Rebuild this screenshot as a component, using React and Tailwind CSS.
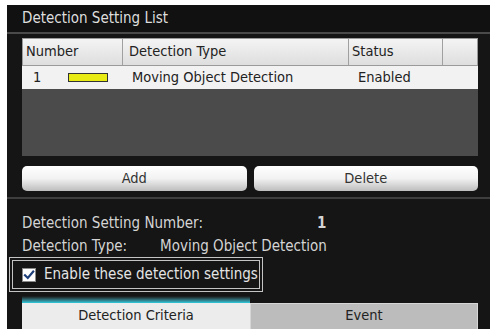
import React from 'react';

const font = { fontFamily: '"DejaVu Sans Condensed", "Liberation Sans", Arial, sans-serif' };

function CheckMark() {
  return (
    <span className="flex h-[14px] w-[14px] shrink-0 items-center justify-center border border-[#8a8a8a] bg-white">
      <svg viewBox="0 0 12 12" className="h-[12px] w-[12px]">
        <path d="M2 6.2 L4.8 9 L10.2 2.6" fill="none" stroke="#1d3f7a" strokeWidth="2.2" strokeLinecap="square" />
      </svg>
    </span>
  );
}

export default function App() {
  return (
    <div className="h-[329px] w-[495px] overflow-hidden bg-white pl-[7px] pr-[5px] pt-[5px]" style={font}>
      <div className="flex h-full flex-col overflow-hidden bg-[#151515] text-[#d8d8d8] [&>*]:shrink-0">
        {/* title */}
        <div className="flex h-[29px] items-center border-b-2 border-[#4a4a4a] bg-[#111111] pl-[15px] text-[15px] text-[#dedede]">
          Detection Setting List
        </div>

        {/* list table */}
        <div className="ml-[15px] mr-[12px] mt-[4px] flex h-[118px] flex-col bg-[#4b4b4b] text-[14.5px] text-[#222]">
          <div className="flex h-[28px] shrink-0 border border-[#9a9a9a] bg-gradient-to-b from-[#f4f4f4] to-[#dedede]">
            <div className="flex w-[100px] items-center border-r border-[#a0a0a0] pl-[3px]">Number</div>
            <div className="flex w-[226px] items-center border-r border-[#a0a0a0] pl-[6px]">Detection Type</div>
            <div className="flex w-[94px] items-center border-r border-[#a0a0a0] pl-[3px]">Status</div>
            <div className="flex-1" />
          </div>
          <div className="flex h-[23px] shrink-0 items-center bg-[#f2f2f2]">
            <div className="flex w-[100px] items-center">
              <span className="ml-[11px] w-[35px]">1</span>
              <span className="h-[9px] w-[40px] border border-[#333] bg-[#e8ec14]" />
            </div>
            <div className="w-[226px] pl-[10px]">Moving Object Detection</div>
            <div className="pl-[10px]">Enabled</div>
          </div>
        </div>

        {/* buttons */}
        <div className="ml-[15px] mr-[12px] mt-[10px] grid grid-cols-2 gap-[7px] text-[14.5px] text-[#333]">
          <button className="flex h-[25px] items-center justify-center rounded-[5px] bg-gradient-to-b from-[#ffffff] via-[#f2f2f2] to-[#bdbdbd]">
            Add
          </button>
          <button className="flex h-[25px] items-center justify-center rounded-[5px] bg-gradient-to-b from-[#ffffff] via-[#f2f2f2] to-[#bdbdbd]">
            Delete
          </button>
        </div>

        <div className="mt-[6px] border-b-2 border-[#3e3e3e]" />

        {/* details */}
        <div className="mt-[15px] flex h-[18px] items-center pl-[15px] text-[15px] text-[#d4d4d4]">
          <span className="w-[295px]">Detection Setting Number:</span>
          <span className="font-bold">1</span>
        </div>
        <div className="mt-[5px] flex h-[18px] items-center pl-[15px] text-[15px] text-[#d4d4d4]">
          <span className="w-[138px]">Detection Type:</span>
          <span>Moving Object Detection</span>
        </div>

        <div className="ml-[2px] mt-[2px] flex h-[35px] w-[254px] items-center gap-[8px] border-[4px] border-double border-[#c4c4c4] pl-[9px] text-[15px] text-[#e4e4e4]">
          <CheckMark />
          <span>Enable these detection settings</span>
        </div>

        {/* tabs */}
        <div className="ml-[15px] mr-[12px] mt-[4px] flex flex-col">
          <div className="h-[7px] w-[228px] bg-gradient-to-b from-[#151515] to-[#2ccbe0]" />
          <div className="flex h-[28px] text-[14.5px] text-[#222]">
            <div className="flex w-[228px] items-start justify-center bg-[#ececec] pt-[2px]">Detection Criteria</div>
            <div className="flex flex-1 items-start justify-center border border-[#d6d6d6] bg-[#bcbcbc] pt-[1px]">Event</div>
          </div>
        </div>
      </div>
    </div>
  );
}
